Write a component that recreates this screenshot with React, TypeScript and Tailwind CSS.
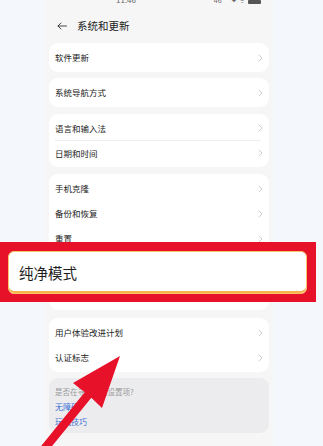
const font = { fontFamily: '"Noto Sans CJK SC", "Noto Sans", sans-serif' };

function Chevron() {
  return (
    <svg width="5" height="8" viewBox="0 0 5 8" fill="none" className="shrink-0">
      <path d="M1 1l3 3-3 3" stroke="#c6c6c8" strokeWidth="0.9" strokeLinecap="round" strokeLinejoin="round" />
    </svg>
  );
}

function Row({ label, divider }: { label: string; divider?: boolean }) {
  return (
    <div className="relative flex h-[25px] items-center justify-between pl-[6px] pr-[6px]">
      <span className="text-[8.5px] text-[#222]">{label}</span>
      <Chevron />
      {divider && <div className="absolute bottom-0 left-[6px] right-[8px] h-px bg-[#ededed]" />}
    </div>
  );
}

function Card({ children, className = '' }: { children: React.ReactNode; className?: string }) {
  return <div className={`rounded-[9px] bg-white ${className}`}>{children}</div>;
}

export default function App() {
  return (
    <div className="relative h-[446px] w-[323px] overflow-hidden bg-[#f4f7fb]" style={font}>
      <div className="ml-[45px] flex min-h-[446px] w-[228px] flex-col bg-[#f6f6f7] px-[4px]">
        {/* status bar, cut at the top */}
        <div className="flex h-[4px] items-end justify-between overflow-hidden pl-[67px] pr-[8px]">
          <span className="text-[8px] leading-none text-[#666]">11:46</span>
          <span className="flex items-end gap-[3px] text-[7px] leading-none text-[#666]">
            <span>46 ⁴⁶</span>
            <span>✦ ᯤ</span>
            <span className="inline-block h-[4px] w-[13px] rounded-[1px] bg-[#555]" />
          </span>
        </div>

        <div className="mt-[14px] flex h-[15px] items-center pl-[8px]">
          <svg width="10" height="8" viewBox="0 0 10 8" fill="none">
            <path d="M9.5 4H1M4 1L1 4l3 3" stroke="#333" strokeWidth="0.9" strokeLinecap="round" strokeLinejoin="round" />
          </svg>
          <span className="ml-[10px] text-[10.5px] text-[#222]">系统和更新</span>
        </div>

        <Card className="mt-[10px] py-[2px]">
          <Row label="软件更新" />
        </Card>
        <Card className="mt-[6px] py-[2px]">
          <Row label="系统导航方式" />
        </Card>
        <Card className="mt-[7px] py-[1.5px]">
          <Row label="语言和输入法" divider />
          <Row label="日期和时间" />
        </Card>
        <Card className="mt-[7px] pt-[2px] pb-[59px]">
          <Row label="手机克隆" />
          <Row label="备份和恢复" />
          <Row label="重置" />
        </Card>
        <Card className="mt-[8px] py-[2px]">
          <Row label="用户体验改进计划" />
          <Row label="认证标志" />
        </Card>
        <div className="mt-[6px] flex h-[55px] flex-col rounded-[9px] bg-[#ececee] pl-[6px] pt-[9px]">
          <span className="text-[7.5px] leading-[10px] text-[#9a9a9a]">是否在寻找其他设置项?</span>
          <span className="mt-[4px] text-[8px] leading-[11px] text-[#3b6fd6]">无障碍</span>
          <span className="mt-[4px] text-[8px] leading-[11px] text-[#3b6fd6]">玩机技巧</span>
        </div>
      </div>

      {/* red highlight overlay */}
      <div className="absolute left-0 top-[242px] flex h-[60px] w-[316px] bg-[#e8112a] pb-[8px] pl-[8px] pr-[9px] pt-[9px]">
        <div className="flex flex-1 items-center rounded-[6px] border border-[#f8c56a] bg-white pl-[10px] shadow-[inset_0_-2px_0_#f7b64c]">
          <span className="text-[14.5px] text-[#1e1e1e]">纯净模式</span>
        </div>
      </div>

      {/* red arrow */}
      <svg className="absolute left-0 top-0" width="323" height="446" viewBox="0 0 323 446">
        <polygon
          points="120,356 102,408 91.3,397.7 47.3,452 36.3,452 84.7,392.3 73,383"
          fill="#e8112a"
        />
      </svg>
    </div>
  );
}
